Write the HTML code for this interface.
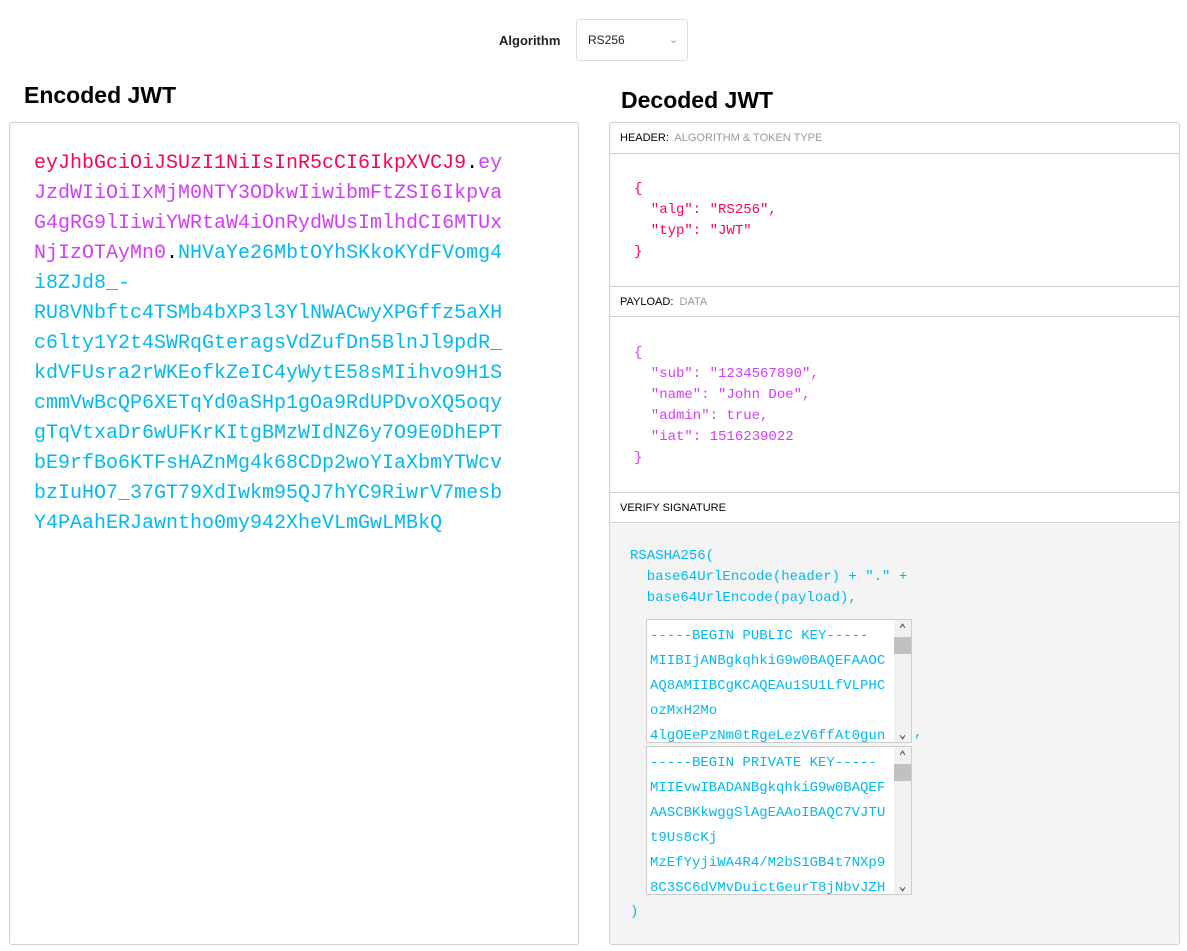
<!DOCTYPE html>
<html><head><meta charset="utf-8"><style>
*{margin:0;padding:0;box-sizing:border-box}
body{width:1187px;height:951px;background:#fff;font-family:"Liberation Sans",sans-serif;position:relative;overflow:hidden}
.a{position:absolute}
.mono{font-family:"Liberation Mono",monospace}
.enc{left:34px;top:149px;font-size:20px;line-height:30px;white-space:pre;letter-spacing:0}
.r{color:#fb015b}.m{color:#d63aff}.c{color:#00b9f1}.k{color:#000}
.bar{left:610px;width:569px;height:31px;border-top:1px solid #d0d0d0;border-bottom:1px solid #d0d0d0;font-size:11px;line-height:30px;padding-left:10px;color:#000}
.bar span{color:#999}
.code{font-size:14px;line-height:21px;white-space:pre}
.ta{background:#fff;border:1px solid #ccc;overflow:hidden;font-size:14px;line-height:25px;white-space:pre;padding-left:3px;padding-top:4px;color:#00b9f1}
.sb{position:absolute;right:0;top:0;width:17px;height:100%;background:#f1f1f1}
.sb i{position:absolute;left:0;top:17px;width:17px;height:17px;background:#c1c1c1}
.sb b{position:absolute;left:0;width:17px;text-align:center;font-size:13px;color:#505050;font-weight:bold;line-height:15px}
</style></head><body>
<div class="a" style="left:499px;top:33px;font-size:13px;font-weight:bold;color:#222">Algorithm</div>
<div class="a" style="left:576px;top:19px;width:112px;height:42px;border:1px solid #ddd;border-radius:3px;font-size:12px;line-height:40px;padding-left:11px;color:#222">RS256<span class="a" style="left:92px;top:0;color:#999;font-size:11px">&#8964;</span></div>
<div class="a" style="left:24px;top:82px;font-size:23px;font-weight:bold">Encoded JWT</div>
<div class="a" style="left:621px;top:87px;font-size:23px;font-weight:bold">Decoded JWT</div>
<div class="a" style="left:9px;top:122px;width:570px;height:823px;border:1px solid #d0d0d0;border-radius:3px"></div>
<div class="a mono enc"><span class="r">eyJhbGciOiJSUzI1NiIsInR5cCI6IkpXVCJ9</span><span class="k">.</span><span class="m">ey
JzdWIiOiIxMjM0NTY3ODkwIiwibmFtZSI6Ikpva
G4gRG9lIiwiYWRtaW4iOnRydWUsImlhdCI6MTUx
NjIzOTAyMn0</span><span class="k">.</span><span class="c">NHVaYe26MbtOYhSKkoKYdFVomg4
i8ZJd8_-
RU8VNbftc4TSMb4bXP3l3YlNWACwyXPGffz5aXH
c6lty1Y2t4SWRqGteragsVdZufDn5BlnJl9pdR_
kdVFUsra2rWKEofkZeIC4yWytE58sMIihvo9H1S
cmmVwBcQP6XETqYd0aSHp1gOa9RdUPDvoXQ5oqy
gTqVtxaDr6wUFKrKItgBMzWIdNZ6y7O9E0DhEPT
bE9rfBo6KTFsHAZnMg4k68CDp2woYIaXbmYTWcv
bzIuHO7_37GT79XdIwkm95QJ7hYC9RiwrV7mesb
Y4PAahERJawntho0my942XheVLmGwLMBkQ</span></div>

<div class="a" style="left:609px;top:122px;width:571px;height:823px;border:1px solid #d0d0d0;border-radius:3px"></div>
<div class="a" style="left:610px;top:524px;width:569px;height:420px;background:#f4f4f4"></div>
<div class="a bar" style="top:123px;border-top:none">HEADER:&nbsp; <span>ALGORITHM &amp; TOKEN TYPE</span></div>
<div class="a mono code r" style="left:634px;top:179px">{
  "alg": "RS256",
  "typ": "JWT"
}</div>
<div class="a bar" style="top:286px">PAYLOAD:&nbsp; <span>DATA</span></div>
<div class="a mono code m" style="left:634px;top:343px">{
  "sub": "1234567890",
  "name": "John Doe",
  "admin": true,
  "iat": 1516239022
}</div>
<div class="a bar" style="top:492px">VERIFY SIGNATURE</div>
<div class="a mono code c" style="left:630px;top:546px">RSASHA256(
  base64UrlEncode(header) + "." +
  base64UrlEncode(payload),</div>
<div class="a mono ta" style="left:646px;top:619px;width:266px;height:124px">-----BEGIN PUBLIC KEY-----
MIIBIjANBgkqhkiG9w0BAQEFAAOC
AQ8AMIIBCgKCAQEAu1SU1LfVLPHC
ozMxH2Mo
4lgOEePzNm0tRgeLezV6ffAt0gun<div class="sb"><b style="top:2px">&#8963;</b><i></i><b style="bottom:0">&#8964;</b></div></div>
<div class="a mono c" style="left:914px;top:725px;font-size:14px">,</div>
<div class="a mono ta" style="left:646px;top:746px;width:266px;height:149px">-----BEGIN PRIVATE KEY-----
MIIEvwIBADANBgkqhkiG9w0BAQEF
AASCBKkwggSlAgEAAoIBAQC7VJTU
t9Us8cKj
MzEfYyjiWA4R4/M2bS1GB4t7NXp9
8C3SC6dVMvDuictGeurT8jNbvJZH<div class="sb"><b style="top:2px">&#8963;</b><i></i><b style="bottom:0">&#8964;</b></div></div>
<div class="a mono code c" style="left:630px;top:902px">)</div>
</body></html>
